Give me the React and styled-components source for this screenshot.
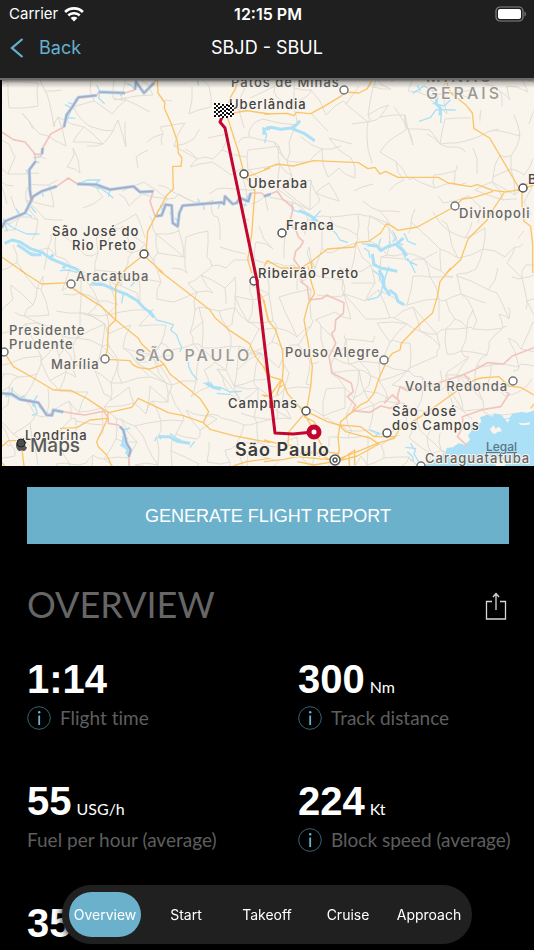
import React from "react"
import styled, { createGlobalStyle, css } from "styled-components"
import { FaApple } from "react-icons/fa"

const GlobalStyle = createGlobalStyle`
  * {
    box-sizing: border-box;
  }
  body {
    margin: 0;
    background: #000;
    color: #fff;
    font-family: Inter, "Liberation Sans", sans-serif;
  }
`

// Each tile is drawn on a grid three times finer than the screen.
const tiles = [
  {
    id: "nw",
    x: 0,
    y: 78,
    roads: [
      "M472 6L474 45L495 75L493 90L515 140L532 190L535 225L546 240L543 265L518 265L520 333L500 352L480 390L443 460L438 525",
      "M432 530L375 575L370 585M440 540L490 585M5 537L75 585",
      "M715 6L705 35L690 60L683 85L683 120L715 220L733 290L765 340L760 400L755 470L743 545L755 585",
      "M700 105L740 98L810 108M740 296L760 290L810 270",
    ],
    rivers: [
      "M195 80L215 90L200 128M196 118L226 121M205 74L222 80M235 58L224 66",
      "M290 22L300 40L296 60L314 78M375 45L360 52M405 35L396 24L380 16",
      "M234 318L262 306L300 306L284 318L318 342L340 360M270 322L300 332M330 335L326 356",
      "M15 432L40 450L80 468L118 468M60 410L48 392M92 385L108 405M75 405L96 416M10 422L22 460",
      "M128 226L120 236L100 240M105 250L118 254M88 290L78 276M96 345L84 330M125 340L130 356",
      "M498 380L482 384L490 404M518 410L508 404M533 430L526 420M600 378L594 362M610 376L612 396M660 374L654 392M675 355L684 362M720 378L742 382M745 350L738 368",
      "M596 22L592 8M802 6L790 12",
      "M810 155L788 150L800 170L794 195",
    ],
    lakes: ["M14 496L36 486L60 492L92 512L128 524L152 542L186 556L226 572L250 590", "M52 500L96 530L124 530M150 540L160 530M196 556L190 572"],
    borders: [
      "M5 162L40 185L75 192L105 228L107 250L88 275L90 340L95 370",
      "M100 228L125 230L128 210L152 168L192 147L200 110L215 90L235 58L290 52L296 42L375 45L405 35L408 12L432 45L462 15L466 6",
      "M5 450L15 430L75 405L100 355L125 340L170 325L205 300L232 318L290 320L330 335L400 325L420 342L460 340L450 370L465 415L485 412L497 380L515 382L518 435L533 445L538 405L548 383L665 373L672 378L675 355L698 378L710 375L720 360L745 370L752 345L785 345L795 355L810 348",
    ],
    riverBorders: [
      "M128 210L126 228M192 147L200 110L215 90L235 58L290 52M296 42L375 45M405 35L408 12L432 45L462 15",
      "M107 250L88 275L90 340L95 370M5 450L15 430L75 405L100 355L125 340L170 325M232 318L290 320L330 335L400 325L420 342L460 340",
      "M465 415L485 412L497 380L515 382L518 435L533 445L538 405L548 383L665 373L672 378L675 355L698 378L710 375L720 360L745 370L752 345",
    ],
  },
  {
    id: "ne",
    x: 264,
    y: 78,
    roads: [
      "M0 108L70 106L90 113L97 103L140 107L180 85L230 55L245 42L285 45L310 32L322 10",
      "M545 6L560 45L605 80L625 105L630 152L677 180L765 330",
      "M0 275L38 258L88 264L148 248L283 254L312 272L333 268L348 288L365 280L402 298L523 298L553 315L620 326L640 320L687 337L725 342L778 333L790 318",
      "M575 383L595 363L630 358L687 340M575 384L460 447L402 457L380 442L367 438L350 465L315 490L278 493L270 507L190 513L143 550L110 570L50 570L10 548L0 565M143 550L143 585",
      "M720 345L690 390L670 425L612 483L590 545L548 585",
      "M774 335L774 380L780 430L800 445L806 500L806 585M778 333L810 320",
    ],
    rivers: [
      "M510 40L480 24L446 46M470 40L460 22",
      "M465 130L500 118L516 95L575 96M530 135L532 100M560 65L540 84L506 76M540 40L536 62L546 66",
      "M85 375L84 395L105 402M106 400L120 404M150 420L170 398M155 430L140 424M180 436L215 465L228 486L252 494M165 430L182 440L205 458",
      "M293 497L318 500M388 462L396 480L386 492M420 466L432 490L456 500M300 510L314 520L318 540M345 500L350 482M376 490L378 510M400 496L418 500",
      "M430 540L442 560L454 585M415 520L426 545L460 562",
    ],
    lakes: [
      "M0 170L0 155L20 148L50 154L82 150L100 138L108 128M84 152L120 166L152 188M14 156L10 145",
      "M520 55L516 76L530 92L528 112",
      "M104 398L130 408L146 418L160 430",
      "M310 500L340 505L350 518L372 505L398 498L418 480M396 500L420 520L428 534M325 528L330 560L350 570L400 580",
    ],
    borders: ["M0 355L40 340L55 362L88 390L75 440L95 455L104 478L118 490L110 505L95 520L90 545L108 570L110 585"],
    riverBorders: ["M0 355L20 348"],
  },
  {
    id: "sw",
    x: 0,
    y: 270,
    roads: [
      "M60 0L125 42L212 38L218 55L305 110L347 150L415 205L425 222L455 250L492 283L510 312L570 360L602 388L626 425L610 458L630 478L700 497L810 518",
      "M475 0L560 65L630 120L645 143L690 182L748 220L768 262L790 290L800 310",
      "M376 0L347 50L347 150L325 170L322 240L315 268M322 268L390 272L398 284L415 293L450 297L492 283",
      "M13 247L40 290L90 318L160 360L212 361L260 385L325 428L395 412L415 385L505 428L550 437L610 458",
      "M325 428L322 448L290 515L295 530L320 555L335 588M322 445L270 450L230 473L180 475",
      "M5 530L25 512L50 512M65 530L72 588M5 578L14 588",
      "M700 588L740 575L810 565M780 70L790 90L805 150M785 375L810 378",
    ],
    rivers: [
      "M180 2L206 0L232 8M270 45L280 38L330 50L350 62M365 100L370 70M392 50L400 40L406 28",
      "M450 120L470 150L500 158L520 164L512 180L530 195L536 212L545 232L540 246",
      "M565 270L566 290L576 310L592 330M610 340L632 338L640 350L662 352L690 366L726 364M650 370L690 374",
      "M20 382L14 366M34 372L38 352M60 386L74 376M100 396L112 376M96 436L112 430L104 404M116 408L128 420",
      "M360 525L384 540M372 480L390 474M376 546L388 560M366 500L384 506",
      "M464 514L470 500M510 490L530 505L545 512M486 496L480 508M570 532L584 514",
    ],
    lakes: [
      "M278 42L310 44L350 62L382 74L412 92L430 112L446 124L462 142",
      "M618 340L640 352L662 358M475 500L508 500L532 514L570 520",
      "M16 374L34 374L60 388L96 394L104 410M372 500L368 522L382 532L384 550",
    ],
    borders: [
      "M5 370L35 372L60 388L115 398L140 435L156 436L160 420L220 430L255 435L305 425L312 424L325 445L325 460L355 465L370 480L380 520L392 540L386 560L388 588",
    ],
    riverBorders: ["M5 370L35 372L60 388L115 398L140 435L156 436L160 420L190 426", "M360 470L370 480L380 520L392 540L386 560"],
  },
  {
    id: "se",
    x: 264,
    y: 270,
    roads: [
      "M560 -6L528 35L520 80L505 130L470 160L412 220L408 240L385 250L370 270L345 325L330 370L310 395L290 404L230 455L222 500L226 540L218 570",
      "M132 -12L140 30L152 70L133 100L120 150L130 205L145 290L140 350L133 390L127 424",
      "M0 90L12 150L35 180L55 240L58 290L55 330L70 370L110 415L140 465L175 530M120 440L150 455L170 490",
      "M0 290L20 320L53 330L38 375M0 380L20 375L50 332M127 424L75 485L70 540M58 345L46 352L38 375",
      "M127 424L190 455L225 465L290 470L330 500L395 500M225 465L245 485L320 505L345 522",
      "M215 570L280 545L340 520L390 505L405 480L470 440L520 405L575 365L630 330L650 324L705 320L735 348L770 352L810 375M800 415L810 402",
      "M218 574L280 558L345 522M0 510L30 518L100 530M0 575L60 568L100 560L160 566L215 570M100 575L150 585L210 575M222 550L180 545L165 560M230 570L258 550L272 540L272 585M210 575L160 550L110 545M255 550L256 588",
    ],
    rivers: [
      "M325 0L345 14L356 45L352 70L340 82L310 90M375 -10L364 20L360 45",
      "M318 480L346 490L330 500M424 532L455 535L450 552L464 575M440 520L450 538M430 545L446 560L448 575",
    ],
    lakes: ["M345 0L358 24L360 50L378 76M376 60L395 74L402 94L420 104"],
    borders: [
      "M110 15L115 38L130 50L135 90L175 85L188 75L210 85L240 98L238 130L215 150L213 180L203 190L215 220L195 260L205 310L235 325L262 340L268 365L250 380L275 405L265 422L318 427L350 408L380 415L405 400L400 380L408 350L430 362L520 340L595 315L635 298L670 278L718 282L745 258L810 233",
      "M600 315L615 325L610 350L660 356M725 365L735 372L710 410L660 418L595 440L598 470L580 500L612 530M360 400L385 375L408 395",
    ],
    riverBorders: [],
  },
]

const seaPath =
  "M815 420L790 428L772 426L745 432L736 444L722 446L712 434L690 430L686 440L668 434L648 442L652 456L640 464L620 462L622 484L612 496L618 510L602 524L584 520L566 532L548 534L544 550L520 562L500 574L480 588L815 588Z"
const islands = [
  "M678 476L690 466L694 476L706 470L714 484L700 486L694 492L684 488Z",
  "M762 458L780 460L798 456L796 464L772 466Z",
  "M690 574L704 566L728 572L722 588L696 588Z",
  "M724 448L730 458L738 448Z",
]

// x and y are the left end of the text baseline
const cities = [
  { name: "Patos de Minas", x: 231, y: 87, dot: [344, 90], soft: true },
  { name: "Uberlândia", x: 229, y: 109 },
  { name: "Uberaba", x: 248, y: 188, dot: [244, 174] },
  { name: "Franca", x: 286, y: 230, dot: [282, 233] },
  { name: "Divinopoli", x: 459, y: 218, dot: [455, 206], soft: true },
  { name: "B", x: 528, y: 184, dot: [523, 188] },
  { name: "São José do", x: 52, y: 236 },
  { name: "Rio Preto", x: 72, y: 250, dot: [144, 254] },
  { name: "Aracatuba", x: 76, y: 281, dot: [71, 284], soft: true },
  { name: "Ribeirão Preto", x: 258, y: 278, dot: [254, 281] },
  { name: "Presidente", x: 9, y: 335, soft: true },
  { name: "Prudente", x: 9, y: 349, dot: [4, 352], soft: true },
  { name: "Marília", x: 51, y: 369, dot: [105, 359], soft: true },
  { name: "Pouso Alegre", x: 285, y: 357, dot: [384, 360], soft: true },
  { name: "Volta Redonda", x: 405, y: 391, dot: [513, 381], soft: true },
  { name: "Campinas", x: 228, y: 408, dot: [306, 411] },
  { name: "São José", x: 392, y: 416 },
  { name: "dos Campos", x: 392, y: 430, dot: [387, 433] },
  { name: "Londrina", x: 25, y: 440 },
  { name: "Caraguatatuba", x: 425, y: 463, dot: [421, 466], soft: true },
]

const buildSideRoads = () => {
  let seed = 11
  const random = () => {
    seed = (seed * 16807) % 2147483647
    return seed / 2147483647
  }
  const step = 16
  const rows = 26
  const columns = 35
  const points = Array.from({ length: rows }, (_, row) =>
    Array.from({ length: columns }, (_, column) => [
      Math.round(column * step + (random() - 0.5) * 18),
      Math.round(74 + row * step + (random() - 0.5) * 18),
    ])
  )
  const lines = []
  const connect = (a, b, chance) => {
    if (random() > chance) return
    const midX = Math.round((a[0] + b[0]) / 2 + (random() - 0.5) * 4)
    const midY = Math.round((a[1] + b[1]) / 2 + (random() - 0.5) * 4)
    lines.push(`M${a[0]} ${a[1]}L${midX} ${midY}L${b[0]} ${b[1]}`)
  }
  for (let row = 0; row < rows - 1; row += 1) {
    const chance = row > 10 ? 0.6 : 0.4
    for (let column = 0; column < columns - 1; column += 1) {
      connect(points[row][column], points[row][column + 1], chance)
      connect(points[row][column], points[row + 1][column], chance)
      connect(points[row][column], points[row + 1][column + 1], 0.14)
    }
  }
  return lines.join("")
}

const sideRoads = buildSideRoads()

const buildFlag = () => {
  const cells = []
  for (let row = 0; row < 7; row += 1) {
    for (let column = 0; column < 10; column += 1) {
      if ((row + column) % 2 === 0) {
        const wave = column > 2 && column < 7 ? 1 : 0
        cells.push(`M${column * 2} ${row * 2 + wave}h2v2h-2z`)
      }
    }
  }
  return cells.join("")
}

const flagCells = buildFlag()

const RouteMap = () => (
  <MapFrame>
    <MapDrawing
      viewBox="2 80 532 386"
      preserveAspectRatio="xMidYMid slice"
      role="img"
      aria-label="SBJD - SBUL"
    >
      <defs>
        <linearGradient id="headerShade" x1="0" y1="0" x2="0" y2="1">
          <stop offset="0" stopColor="#000" stopOpacity="0.65" />
          <stop offset="0.4" stopColor="#000" stopOpacity="0.22" />
          <stop offset="1" stopColor="#000" stopOpacity="0" />
        </linearGradient>
      </defs>
      <rect x="0" y="78" width="534" height="388" fill="#f9f5ed" />
      <SideRoad d={sideRoads} />
      <g transform="translate(264 270) scale(0.33333)">
        <path d={seaPath} fill="#abe0f6" />
        {islands.map(island => (
          <path key={island} d={island} fill="#f9f5ed" />
        ))}
      </g>
      {tiles.map(tile => (
        <g
          key={tile.id}
          transform={`translate(${tile.x} ${tile.y}) scale(0.33333)`}
        >
          <Line $color="#abe0f6" $width={4} d={tile.rivers.join("")} />
          <Line $color="#abe0f6" $width={9} d={tile.lakes.join("")} />
          <Line $color="#f1c5be" $width={5} d={tile.borders.join("")} />
          <Line $color="#a9dcf4" $width={10} d={tile.riverBorders.join("")} />
          <Line $color="#b3a6bd" $width={5} d={tile.riverBorders.join("")} />
          <Line $color="#fcc468" $width={4} d={tile.roads.join("")} />
        </g>
      ))}
      <RegionName x="426" y="82">MINAS</RegionName>
      <RegionName x="426" y="99">GERAIS</RegionName>
      <RegionName x="135" y="361">SÃO PAULO</RegionName>
      {cities.map(city => (
        <g key={city.name}>
          {city.dot && (
            <CityDot cx={city.dot[0]} cy={city.dot[1]} r="4" $soft={city.soft} />
          )}
          <CityName x={city.x} y={city.y} $soft={city.soft}>
            {city.name}
          </CityName>
        </g>
      ))}
      <CityDot cx="335" cy="460" r="5" />
      <CityDot cx="335" cy="460" r="2" />
      <CapitalName x="235" y="456">São Paulo</CapitalName>
      <Route d="M222 117L220 122L225 128L257 281L275 433L293 434L313 432" />
      <circle cx="314" cy="432" r="5" fill="#fff" stroke="#c3062f" strokeWidth="5" />
      <g transform="translate(214 103)">
        <rect width="20" height="15" fill="#fff" />
        <path d={flagCells} fill="#111" />
      </g>
      <FaApple x="14" y="437" size="15" color="#565656" />
      <circle cx="21" cy="443" r="4" fill="#4d4d4d" stroke="#222" />
      <MapsMark x="30" y="452">Maps</MapsMark>
      <rect x="0" y="79" width="534" height="9" fill="url(#headerShade)" />
    </MapDrawing>
    <LegalLink href="#legal">Legal</LegalLink>
  </MapFrame>
)

const stats = [
  { value: "1:14", label: "Flight time", info: true },
  { value: "300", unit: "Nm", label: "Track distance", info: true },
  { value: "55", unit: "USG/h", label: "Fuel per hour (average)" },
  { value: "224", unit: "Kt", label: "Block speed (average)", info: true },
  { value: "35" },
]

const sections = ["Overview", "Start", "Takeoff", "Cruise", "Approach"]

const App = () => (
  <Screen>
    <GlobalStyle />
    <Header>
      <StatusBar>
        <Carrier>
          Carrier
          <svg width="20" height="15" viewBox="0 0 20 15" fill="#fff">
            <path d="M10 0C13.900 0 17.400 1.500 19.800 4L18 6C16 3.900 13.200 2.700 10 2.700S4 3.900 2 6L.2 4C2.600 1.500 6.100 0 10 0Z" />
            <path d="M10 4.900C12.600 4.900 14.900 5.900 16.600 7.600L14.700 9.500C13.500 8.300 11.900 7.600 10 7.600S6.500 8.300 5.300 9.500L3.400 7.600C5.100 5.900 7.400 4.900 10 4.900Z" />
            <path d="M10 9.800C11.300 9.800 12.500 10.300 13.400 11.100L10 14.600L6.600 11.100C7.500 10.300 8.700 9.800 10 9.800Z" />
          </svg>
        </Carrier>
        <Clock>12:15 PM</Clock>
        <Battery width="32" height="16" viewBox="0 0 32 16">
          <rect x="1" y="1" width="27" height="14" rx="4" fill="none" stroke="#858585" strokeWidth="1.200" />
          <rect x="3" y="3" width="23" height="10" rx="2" fill="#fff" />
          <path d="M29.500 5.500C31.300 6.300 31.300 9.700 29.500 10.500Z" fill="#858585" />
        </Battery>
      </StatusBar>
      <TitleBar>
        <BackButton type="button">
          <svg width="14" height="20" viewBox="0 0 14 20" fill="none" stroke="#66b0cf" strokeWidth="2.300">
            <path d="M12.500 1L2 10L12.500 19" />
          </svg>
          Back
        </BackButton>
        <Title>SBJD - SBUL</Title>
      </TitleBar>
    </Header>
    <Main>
      <RouteMap />
      <Content>
        <ReportButton type="button">GENERATE FLIGHT REPORT</ReportButton>
        <SectionHead>
          <SectionTitle>OVERVIEW</SectionTitle>
          <IconButton type="button" aria-label="Share">
            <svg width="22" height="32" viewBox="0 -4 22 32" fill="none" stroke="#d8d8d8" strokeWidth="1.300">
              <path d="M7 9.500H1.500V27H20.500V9.500H15M11 18V1.500M8 5L11 1.500L14 5" />
            </svg>
          </IconButton>
        </SectionHead>
        <Stats>
          {stats.map(stat => (
            <Stat key={stat.value}>
              <Value>
                {stat.value}
                {stat.unit && <Unit>{stat.unit}</Unit>}
              </Value>
              {stat.label && (
                <Label>
                  {stat.info && (
                    <IconButton type="button" aria-label={stat.label}>
                      <svg width="24" height="24" viewBox="0 0 24 24">
                        <circle cx="12" cy="12" r="11.300" fill="none" stroke="#376073" />
                        <path d="M12.200 9.500V19" stroke="#69b5d6" strokeWidth="1.800" />
                        <circle cx="12.200" cy="6.300" r="1.200" fill="#69b5d6" />
                      </svg>
                    </IconButton>
                  )}
                  {stat.label}
                </Label>
              )}
            </Stat>
          ))}
        </Stats>
      </Content>
    </Main>
    <SectionNav>
      {sections.map((section, index) => (
        <SectionButton key={section} type="button" $active={index === 0}>
          {section}
        </SectionButton>
      ))}
    </SectionNav>
  </Screen>
)

export default App

const Screen = styled.div`
  display: flex;
  flex-direction: column;
  height: 100vh;
  overflow: hidden;
`

const Header = styled.header`
  flex: none;
  padding-bottom: 10px;
  background: #1f1f1f;
  border-bottom: 2px solid #6c6c6a;
`

const StatusBar = styled.div`
  display: grid;
  grid-template-columns: 1fr auto 1fr;
  align-items: center;
  height: 28px;
  padding: 0 7px 0 9px;
  font-size: 15px;
  line-height: 20px;
`

const Carrier = styled.span`
  display: flex;
  align-items: center;
  gap: 6px;
`

const Clock = styled.span`
  font-size: 16px;
  font-weight: 600;
`

const Battery = styled.svg`
  justify-self: end;
`

const TitleBar = styled.div`
  display: grid;
  grid-template-columns: 1fr auto 1fr;
  align-items: center;
  height: 40px;
  padding: 0 10px;
`

const BackButton = styled.button`
  display: flex;
  align-items: center;
  gap: 15px;
  justify-self: start;
  padding: 0;
  border: 0;
  background: none;
  color: #66b0cf;
  font: 18px/24px Inter, sans-serif;
`

const Title = styled.h1`
  margin: 0;
  font-size: 18px;
  font-weight: 400;
  line-height: 24px;
`

const Main = styled.main`
  flex: 1;
  min-height: 0;
  overflow: hidden;
`

const MapFrame = styled.section`
  position: relative;
  padding-left: 2px;
`

const MapDrawing = styled.svg`
  display: block;
  width: 100%;
  height: 386px;
`

const SideRoad = styled.path`
  fill: none;
  stroke: #e0ddd5;
  stroke-width: 1px;
`

const Line = styled.path`
  fill: none;
  stroke: ${props => props.$color};
  stroke-width: ${props => props.$width}px;
  stroke-linejoin: round;
`

const Route = styled.path`
  fill: none;
  stroke: #c3062f;
  stroke-width: 3px;
  stroke-linejoin: round;
`

const mapText = css`
  font-family: Inter, sans-serif;
  paint-order: stroke;
  stroke: #f9f5ed;
  stroke-width: 2px;
  stroke-linejoin: round;
`

const CityName = styled.text`
  ${mapText}
  font-size: 13px;
  font-weight: 500;
  letter-spacing: 1px;
  fill: ${props => (props.$soft ? "#666" : "#444")};
`

const CapitalName = styled.text`
  ${mapText}
  font-size: 18px;
  font-weight: 600;
  letter-spacing: 1px;
  fill: #3c3c3c;
`

const RegionName = styled.text`
  ${mapText}
  font-size: 16px;
  font-weight: 500;
  letter-spacing: 3px;
  fill: #999;
`

const MapsMark = styled.text`
  ${mapText}
  font-size: 19px;
  font-weight: 500;
  fill: #5c5c5c;
`

const CityDot = styled.circle`
  fill: #fff;
  stroke: ${props => (props.$soft ? "#777" : "#555")};
  stroke-width: 1.5px;
`

const LegalLink = styled.a`
  position: absolute;
  right: 17px;
  bottom: 12px;
  color: #5b7584;
  font-size: 12px;
  font-weight: 500;
  line-height: 14px;
`

const Content = styled.div`
  padding: 21px 25px 0 27px;
`

const ReportButton = styled.button`
  display: block;
  width: 100%;
  height: 57px;
  border: 0;
  background: #6cb1cc;
  color: #fff;
  font: 18px/24px "Liberation Sans", sans-serif;
`

const SectionHead = styled.div`
  display: flex;
  align-items: center;
  justify-content: space-between;
  padding: 38px 2px 33px 0;
`

const SectionTitle = styled.h2`
  margin: 0;
  color: #666;
  font: 36px/44px Lato, sans-serif;
`

const IconButton = styled.button`
  display: flex;
  padding: 0;
  border: 0;
  background: none;
`

const Stats = styled.div`
  display: grid;
  grid-template-columns: repeat(2, minmax(0, 1fr));
  gap: 51px 60px;
`

const Stat = styled.div`
  white-space: nowrap;
`

const Value = styled.div`
  font: bold 40px/40px "Liberation Sans", sans-serif;
`

const Unit = styled.span`
  margin-left: 5px;
  font: 16px/20px Lato, sans-serif;
`

const Label = styled.div`
  display: flex;
  align-items: center;
  gap: 9px;
  margin-top: 7px;
  color: #5e5e5e;
  font: 19px/24px Lato, sans-serif;
  font-variant-ligatures: none;
`

const SectionNav = styled.nav`
  position: fixed;
  bottom: 6px;
  left: 50%;
  display: grid;
  grid-template-columns: repeat(5, 72px);
  gap: 9px;
  padding: 7px;
  border-radius: 29px;
  background: #202020;
  box-shadow: 0 0 8px #000;
  transform: translateX(-50%);
`

const SectionButton = styled.button`
  display: flex;
  align-items: center;
  justify-content: center;
  height: 45px;
  padding: 0;
  border: 0;
  border-radius: 23px;
  background: ${props => (props.$active ? "#6cb1cc" : "transparent")};
  color: #fff;
  font: 14px/20px Inter, sans-serif;
`
